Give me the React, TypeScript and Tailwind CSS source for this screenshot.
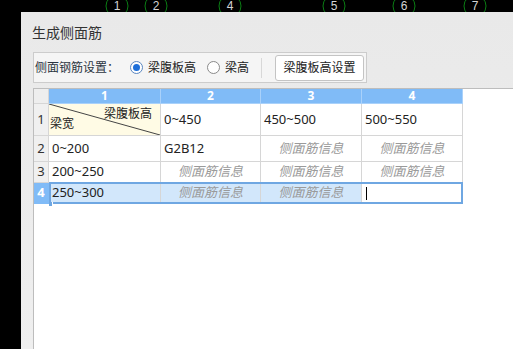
import React from 'react';

const axisLabels = [
  { x: 117, n: '1' },
  { x: 156, n: '2' },
  { x: 230, n: '4' },
  { x: 334, n: '5' },
  { x: 404, n: '6' },
  { x: 475, n: '7' },
];

const font = { fontFamily: '"Noto Sans", "Noto Sans CJK SC", sans-serif' };

function Radio({ checked }: { checked?: boolean }) {
  return (
    <span
      className={`shrink-0 w-[13px] h-[13px] rounded-full border bg-white flex items-center justify-center ${
        checked ? 'border-[#5a86c0]' : 'border-[#8a8a8a]'
      }`}
    >
      {checked && <span className="w-[7px] h-[7px] rounded-full bg-[#1e6fd9]" />}
    </span>
  );
}

function Cell({ children, className = '' }: { children?: React.ReactNode; className?: string }) {
  return (
    <div className={`border-r border-b border-[#d6d6d6] flex items-center whitespace-nowrap text-[13px] text-[#222] ${className}`}>
      {children}
    </div>
  );
}

function Hint({ selected }: { selected?: boolean }) {
  return (
    <Cell className={`justify-center italic text-[12px] !text-[#9a9a9a] ${selected ? 'bg-[#d2e7fb]' : ''}`}>
      侧面筋信息
    </Cell>
  );
}

function RowHead({ n, active }: { n: string; active?: boolean }) {
  return (
    <div
      className={`border-r border-b flex items-center justify-center text-[13px] ${
        active ? 'bg-[#80bbf7] border-[#80bbf7] text-white font-bold' : 'bg-[#f0f0f0] border-[#d6d6d6] text-[#333]'
      }`}
    >
      {n}
    </div>
  );
}

export default function App() {
  return (
    <div className="relative w-[513px] h-[349px] bg-black overflow-hidden" style={font}>
      {/* CAD axis bubbles behind the dialog */}
      <svg className="absolute left-0 top-0" width="513" height="12">
        {axisLabels.map((a) => (
          <circle key={a.n} cx={a.x} cy={6} r={11} fill="none" stroke="#0b7d14" strokeWidth="1" />
        ))}
      </svg>
      {axisLabels.map((a) => (
        <span
          key={a.n}
          className="absolute top-0 w-[12px] h-[12px] -ml-[6px] text-center text-[12px] leading-[12px] text-[#d4d4d4]"
          style={{ left: a.x, fontFamily: '"Liberation Sans", sans-serif' }}
        >
          {a.n}
        </span>
      ))}

      <div className="absolute left-[21px] top-[12px] w-[520px] h-[340px] bg-gradient-to-b from-[#e9e9e9] to-[#efefef] flex flex-col">
        <div className="h-[40px] pl-[11px] flex items-center text-[14px] text-[#333]">生成侧面筋</div>

        <div className="ml-[12px] w-[334px] h-[31px] bg-[#f5f5f5] border border-[#cccccc] flex items-center whitespace-nowrap text-[12px] text-[#222]">
          <span className="shrink-0 pl-[1px] text-[#2b3440]">侧面钢筋设置：</span>
          <span className="shrink-0 ml-[11px] flex items-center gap-[5px]">
            <Radio checked />
            梁腹板高
          </span>
          <span className="shrink-0 ml-[11px] flex items-center gap-[5px]">
            <Radio />
            梁高
          </span>
          <span className="shrink-0 ml-[12px] w-px h-[20px] bg-[#d8d8d8]" />
          <button className="shrink-0 ml-[13px] w-[89px] h-[26px] bg-white border border-[#c4c4c4] rounded-[3px] text-[12px] text-[#222] flex items-center justify-center">
            梁腹板高设置
          </button>
        </div>

        <div className="mt-[5px] ml-[12px] flex-1 bg-white border-l border-t border-[#bdbdbd]">
          <div className="relative grid grid-cols-[15px_112px_100px_101px_101px] grid-rows-[15px_32px_26px_21px_21px] w-max">
            {/* header row */}
            <div className="bg-[#eeeeee] border-r border-b border-[#d6d6d6]" />
            {['1', '2', '3', '4'].map((h) => (
              <div
                key={h}
                className="bg-[#80bbf7] border-r border-b border-[#a9d1fa] flex items-center justify-center text-[12px] font-bold text-white"
              >
                {h}
              </div>
            ))}

            {/* row 1 */}
            <RowHead n="1" />
            <div className="relative bg-[#fffbe5] border-r border-b border-[#d6d6d6] text-[12px] text-[#222] whitespace-nowrap">
              <svg className="absolute inset-0" width="100%" height="100%" preserveAspectRatio="none" viewBox="0 0 100 100">
                <line x1="0" y1="0" x2="100" y2="100" stroke="#444" strokeWidth="1" vectorEffect="non-scaling-stroke" />
              </svg>
              <span className="absolute right-[8px] top-[1px]">梁腹板高</span>
              <span className="absolute left-[1px] bottom-[2px]">梁宽</span>
            </div>
            <Cell className="pl-[3px]">0~450</Cell>
            <Cell className="pl-[3px]">450~500</Cell>
            <Cell className="pl-[3px]">500~550</Cell>

            {/* row 2 */}
            <RowHead n="2" />
            <Cell className="pl-[3px]">0~200</Cell>
            <Cell className="pl-[3px]">G2B12</Cell>
            <Hint />
            <Hint />

            {/* row 3 */}
            <RowHead n="3" />
            <Cell className="pl-[3px]">200~250</Cell>
            <Hint />
            <Hint />
            <Hint />

            {/* row 4 (selected) */}
            <RowHead n="4" active />
            <Cell className="pl-[3px] bg-[#d2e7fb]">250~300</Cell>
            <Hint selected />
            <Hint selected />
            <Cell className="pl-[4px] bg-white">
              <span className="w-px h-[13px] bg-black" />
            </Cell>

            {/* selection frame */}
            <div className="absolute left-[15px] top-[93px] w-[414px] h-[22px] border-2 border-[#6fa7e2] pointer-events-none" />
            <div className="absolute left-[15px] top-[113px] w-[4px] h-[4px] bg-[#6fa7e2] border-r border-white" />
          </div>
        </div>
      </div>
    </div>
  );
}
